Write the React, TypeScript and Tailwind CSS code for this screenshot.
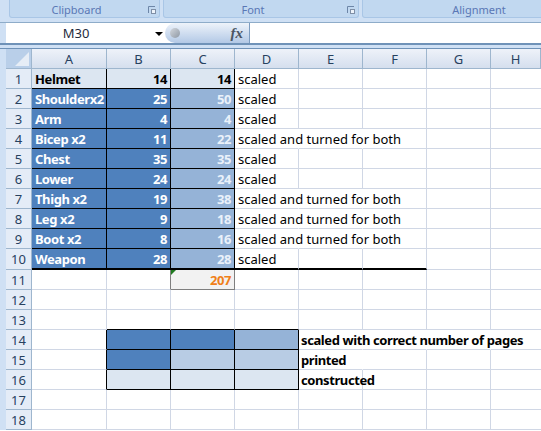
import { ReactNode } from 'react';

const DARK = 'bg-[#4f81bd]';
const MID = 'bg-[#95b3d7]';
const SOFT = 'bg-[#b8cce4]';
const PALE = 'bg-[#dce6f1]';

const columns = [
  { name: 'A', width: 'w-[75px]' },
  { name: 'B', width: 'w-16' },
  { name: 'C', width: 'w-16' },
  { name: 'D', width: 'w-16' },
  { name: 'E', width: 'w-16' },
  { name: 'F', width: 'w-16' },
  { name: 'G', width: 'w-16' },
  { name: 'H', width: 'w-[50px]' },
];

const parts = [
  ['Helmet', 14, 14, 'scaled'],
  ['Shoulderx2', 25, 50, 'scaled'],
  ['Arm', 4, 4, 'scaled'],
  ['Bicep x2', 11, 22, 'scaled and turned for both'],
  ['Chest', 35, 35, 'scaled'],
  ['Lower', 24, 24, 'scaled'],
  ['Thigh x2', 19, 38, 'scaled and turned for both'],
  ['Leg x2', 9, 18, 'scaled and turned for both'],
  ['Boot x2', 8, 16, 'scaled and turned for both'],
  ['Weapon', 28, 28, 'scaled'],
] as const;

function Cell({ width, className = '', children }: { width: string; className?: string; children?: ReactNode }) {
  return (
    <div className={`${width} h-full shrink-0 flex items-center whitespace-nowrap border-r border-b border-[#d0d7e5] px-[3px] pt-[2px] ${className}`}>
      {children}
    </div>
  );
}

function RibbonGroup({ label, width, launcher }: { label: string; width: string; launcher?: boolean }) {
  return (
    <div className={`${width} h-[18px] shrink-0 relative flex items-center justify-center pr-4 pt-[4px] rounded-b-[3px] border border-t-0 border-[#a9c6e6] bg-[#c1d8f0] text-[11px] text-[#5a77b5]`}>
      {label}
      {launcher && (
        <svg className="absolute right-[3px] top-[6px]" width="8" height="8" viewBox="0 0 8 8">
          <path d="M0.5 7V0.5H7" fill="none" stroke="#6d86a8" />
          <rect x="3" y="3" width="5" height="5" fill="#7f8fa6" />
          <rect x="4" y="4" width="3" height="3" fill="#eef4fb" />
        </svg>
      )}
    </div>
  );
}

function RowHead({ n }: { n: number }) {
  return (
    <div className="w-[26px] h-full shrink-0 flex items-center justify-center pt-[2px] border-r border-b border-[#9eb6ce] bg-[#e4ecf7] text-[#27415f]">
      {n}
    </div>
  );
}

export default function App() {
  const rows = Array.from({ length: 18 }, (_, i) => i + 1);

  return (
    <div className="w-[541px] h-[431px] overflow-hidden bg-white text-[13px] text-black" style={{ fontFamily: '"Noto Sans", sans-serif' }}>
      {/* Ribbon labels */}
      <div className="h-[23px] flex gap-[3px] pl-[9px] overflow-hidden bg-[#cfe0f4] border-b border-[#8eacc9]">
        <RibbonGroup label="Clipboard" width="w-[151px]" launcher />
        <RibbonGroup label="Font" width="w-[196px]" launcher />
        <RibbonGroup label="Alignment" width="w-[250px]" />
      </div>

      {/* Formula bar */}
      <div className="h-[22px] flex border-b-2 border-[#6f92b8]">
        <div className="w-[6px] shrink-0 bg-[#cfe0f4]" />
        <div className="w-[159px] shrink-0 flex items-center justify-center relative pr-[19px] pt-[2px] text-[#1e2a3c]">
          M30
          <div className="absolute right-[2px] top-[9px] w-0 h-0 border-x-[4px] border-t-[4px] border-x-transparent border-t-black" />
        </div>
        <div className="w-[85px] shrink-0 flex items-center justify-end pr-[6px] rounded-l-full border-r border-[#7c9cc0] bg-gradient-to-b from-[#eef3fa] to-[#b3c9e6] relative">
          <div className="absolute left-[5px] top-[5px] w-[10px] h-[10px] rounded-full bg-gradient-to-br from-[#d4d8de] to-[#8e98a4]" />
          <span className="italic font-bold text-[15px] leading-none text-[#4b5563]" style={{ fontFamily: '"Liberation Serif", serif' }}>fx</span>
        </div>
      </div>

      <div className="flex h-[4px]">
        <div className="w-full bg-[#cfe0f4] border-b border-[#6f92b8]" />
      </div>

      {/* Sheet */}
      <div className="flex">
        <div className="w-[6px] shrink-0 bg-[#cfe0f4]" />
        <div className="flex-1">
          {/* Column headers */}
          <div className="flex h-5">
            <div className="w-[26px] shrink-0 relative border-r border-b border-[#9eb6ce] bg-[#b9cfe9]">
              <svg className="absolute right-[2px] bottom-[2px]" width="14" height="14" viewBox="0 0 14 14">
                <polygon points="14,0 14,14 0,14" fill="#e6edf6" />
              </svg>
            </div>
            {columns.map((c) => (
              <div key={c.name} className={`${c.width} shrink-0 flex items-center justify-center pt-[2px] border-r border-b border-[#9eb6ce] bg-gradient-to-b from-[#eef2f9] to-[#d5dfee] text-[#27415f]`}>
                {c.name}
              </div>
            ))}
          </div>

          {rows.map((n) => {
            const part = n <= 10 ? parts[n - 1] : undefined;
            const first = n === 1;
            const edge = 'border-r-black border-b-black';
            const tail = n === 10 ? 'border-b-2 border-b-black' : '';
            const long = part && part[3].length > 10;

            return (
              <div key={n} className={`flex ${n === 10 ? 'h-[21px]' : 'h-5'}`}>
                <RowHead n={n} />
                {part ? (
                  <>
                    <Cell width="w-[75px]" className={`${first ? `${PALE} text-black` : `${DARK} text-white`} font-bold tracking-[-0.4px] ${edge} ${tail}`}>{part[0]}</Cell>
                    <Cell width="w-16" className={`${first ? `${PALE} text-black` : `${DARK} text-white`} font-bold tracking-[-0.4px] justify-end ${edge} ${tail}`}>{part[1]}</Cell>
                    <Cell width="w-16" className={`${first ? `${PALE} text-black` : `${MID} text-[#eaf1fa]`} font-bold tracking-[-0.4px] justify-end ${edge} ${tail}`}>{part[2]}</Cell>
                    <Cell width="w-16" className={`${long ? 'border-r-transparent' : ''} ${tail}`}>{part[3]}</Cell>
                    <Cell width="w-16" className={`${long ? 'border-r-transparent' : ''} ${tail}`} />
                    <Cell width="w-16" className={tail} />
                  </>
                ) : n === 11 ? (
                  <>
                    <Cell width="w-[75px]" />
                    <Cell width="w-16" className="border-r-[#7f7f7f]" />
                    <Cell width="w-16" className="relative justify-end font-bold tracking-[-0.4px] bg-[#f2f2f2] text-[#f08019] border-r-[#7f7f7f] border-b-[#7f7f7f]">
                      <div className="absolute left-0 top-0 w-0 h-0 border-r-[5px] border-b-[5px] border-r-transparent border-t-[5px] border-t-[#1f7a1f] border-b-transparent" />
                      207
                    </Cell>
                    <Cell width="w-16" />
                    <Cell width="w-16" />
                    <Cell width="w-16" />
                  </>
                ) : n >= 14 && n <= 16 ? (
                  <>
                    <Cell width="w-[75px]" className="border-r-black" />
                    <Cell width="w-16" className={`${n === 16 ? PALE : DARK} border-r-black border-b-black`} />
                    <Cell width="w-16" className={`${n === 14 ? DARK : n === 15 ? SOFT : PALE} border-r-black border-b-black`} />
                    <Cell width="w-16" className={`${n === 14 ? MID : n === 15 ? SOFT : PALE} border-r-black border-b-black`} />
                    <Cell width="w-16" className={`font-bold tracking-[-0.4px] pl-[2px] ${n === 16 ? '' : 'border-r-transparent'}`}>
                      {n === 14 ? 'scaled with correct number of pages' : n === 15 ? 'printed' : 'constructed'}
                    </Cell>
                    <Cell width="w-16" className={n === 14 ? 'border-r-transparent' : ''} />
                  </>
                ) : (
                  <>
                    <Cell width="w-[75px]" />
                    <Cell width="w-16" className={n === 13 ? 'border-b-black' : ''} />
                    <Cell width="w-16" className={n === 13 ? 'border-b-black' : ''} />
                    <Cell width="w-16" className={n === 13 ? 'border-b-black' : ''} />
                    <Cell width="w-16" />
                    <Cell width="w-16" />
                  </>
                )}
                <Cell width="w-16" className={n === 14 ? 'border-r-transparent' : ''} />
                <Cell width="w-[50px]" className="border-r-0" />
              </div>
            );
          })}
        </div>
      </div>
    </div>
  );
}
